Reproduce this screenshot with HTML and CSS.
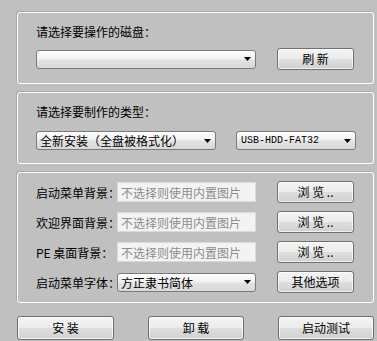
FILE: index.html
```html
<!DOCTYPE html>
<html lang="zh-CN">
<head>
    <meta charset="UTF-8">
    <meta name="viewport" content="width=device-width, initial-scale=1.0">
    <title>U盘启动制作</title>
    <link rel="stylesheet" href="styles.css">
</head>
<body>
    <div class="window">
        <div class="group group-disk">
            <div class="caption">请选择要操作的磁盘：</div>
            <div class="row">
                <div class="combo combo-disk">
                    <span class="combo-text"></span>
                    <svg class="arrow" width="7" height="4" viewBox="0 0 7 4"><path d="M0 0H7L3.5 4Z" fill="#000"/></svg>
                </div>
                <button class="btn">刷 新</button>
            </div>
        </div>

        <div class="group group-type">
            <div class="caption">请选择要制作的类型：</div>
            <div class="row row-type">
                <div class="combo combo-mode">
                    <span class="combo-text">全新安装（全盘被格式化）</span>
                    <svg class="arrow" width="7" height="4" viewBox="0 0 7 4"><path d="M0 0H7L3.5 4Z" fill="#000"/></svg>
                </div>
                <div class="combo combo-fs">
                    <span class="combo-text mono">USB-HDD-FAT32</span>
                    <svg class="arrow" width="7" height="4" viewBox="0 0 7 4"><path d="M0 0H7L3.5 4Z" fill="#000"/></svg>
                </div>
            </div>
        </div>

        <div class="group group-options">
            <div class="field">
                <label class="field-label">启动菜单背景：</label>
                <input class="path-input" type="text" placeholder="不选择则使用内置图片">
                <button class="btn">浏 览 ..</button>
            </div>
            <div class="field">
                <label class="field-label">欢迎界面背景：</label>
                <input class="path-input" type="text" placeholder="不选择则使用内置图片">
                <button class="btn">浏 览 ..</button>
            </div>
            <div class="field">
                <label class="field-label">PE 桌面背景：</label>
                <input class="path-input" type="text" placeholder="不选择则使用内置图片">
                <button class="btn">浏 览 ..</button>
            </div>
            <div class="field">
                <label class="field-label">启动菜单字体：</label>
                <div class="combo combo-font">
                    <span class="combo-text">方正隶书简体</span>
                    <svg class="arrow" width="7" height="4" viewBox="0 0 7 4"><path d="M0 0H7L3.5 4Z" fill="#000"/></svg>
                </div>
                <button class="btn">其他选项</button>
            </div>
        </div>

        <div class="actions">
            <button class="btn btn-big">安 装</button>
            <button class="btn btn-big">卸 载</button>
            <button class="btn btn-big">启动测试</button>
        </div>
    </div>
</body>
</html>
```

FILE: styles.css
```css
* {
    margin: 0;
    padding: 0;
    box-sizing: border-box;
}

body {
    font-family: "Noto Sans CJK SC", "Noto Sans", sans-serif;
    font-size: 12px;
    color: #000;
    background: #c0c0c0;
    overflow: hidden;
}

.window {
    display: flex;
    flex-direction: column;
    gap: 8px;
    padding: 12px 0 0 17px;
    width: 377px;
}

.group {
    width: 357px;
    border: 1px solid #fff;
    border-radius: 3px;
    box-shadow: -1px -1px 0 #a9a9a9;
    padding: 0 0 0 18px;
}

.group-disk {
    height: 72px;
    padding-top: 12px;
}

.group-type {
    height: 72px;
    padding-top: 12px;
}

.group-options {
    height: 131px;
    padding-top: 8px;
    display: flex;
    flex-direction: column;
    gap: 8px;
}

.caption {
    height: 14px;
    line-height: 14px;
}

.row {
    display: flex;
    align-items: center;
    gap: 21px;
    height: 22px;
    margin-top: 9px;
}

.row-type {
    gap: 20px;
    height: 19px;
    margin-top: 12px;
}

.combo {
    display: flex;
    align-items: center;
    justify-content: space-between;
    height: 19px;
    padding: 0 4px 0 3px;
    border: 1px solid #7a7a7a;
    border-radius: 3px;
    background: linear-gradient(#ffffff 0%, #f1f1f1 45%, #e2e2e2 55%, #d9d9d9 100%);
    white-space: nowrap;
}

.combo-text {
    line-height: 17px;
}

.mono {
    font-family: "Liberation Mono", "DejaVu Sans Mono", monospace;
    font-size: 10px;
    padding-left: 1px;
}

.arrow {
    flex-shrink: 0;
}

.combo-disk {
    width: 220px;
}

.combo-mode {
    width: 180px;
}

.combo-fs {
    width: 120px;
}

.combo-font {
    width: 139px;
}

.btn {
    width: 77px;
    height: 22px;
    border: 1px solid #707070;
    border-radius: 3px;
    background: linear-gradient(#f4f4f4 0%, #ececec 48%, #dedede 52%, #d0d0d0 100%);
    box-shadow: inset 0 0 0 1px rgba(255, 255, 255, 0.7);
    font-family: inherit;
    font-size: 12px;
    color: #000;
    line-height: 18px;
    flex-shrink: 0;
}

.field {
    display: flex;
    align-items: center;
    height: 22px;
}

.field-label {
    width: 81px;
    white-space: nowrap;
}

.field .btn {
    margin-left: 21px;
}

.path-input {
    width: 139px;
    height: 20px;
    border: 1px solid #dadada;
    background: #f3f3f3;
    padding: 0 3px;
    font-family: inherit;
    font-size: 12px;
    color: #000;
    outline: none;
}

.path-input::placeholder {
    color: #8c8c8c;
}

.actions {
    display: flex;
    justify-content: space-between;
    width: 357px;
    margin-top: 5px;
}

.btn-big {
    width: 97px;
    height: 24px;
}

.actions .btn-big:nth-child(2) {
    width: 96px;
    margin-left: 34px;
}

.actions .btn-big:nth-child(3) {
    width: 96px;
    margin-left: 34px;
}
```
